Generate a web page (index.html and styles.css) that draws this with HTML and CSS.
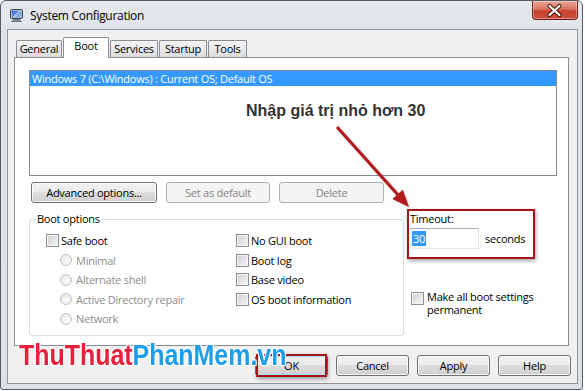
FILE: index.html
```html
<!DOCTYPE html>
<html>
<head>
<meta charset="utf-8">
<title>System Configuration</title>
<link rel="stylesheet" href="styles.css">
</head>
<body>
<div class="window">
  <div class="titlebar">
    <svg class="app-icon" viewBox="0 0 13 13" width="13" height="13">
      <defs>
        <linearGradient id="scr" x1="0" y1="0" x2="1" y2="1">
          <stop offset="0" stop-color="#2a63c9"/>
          <stop offset="1" stop-color="#9cc8ff"/>
        </linearGradient>
      </defs>
      <rect x="0.5" y="0.5" width="12" height="9" rx="1" fill="#a9b3bf" stroke="#3d4a5c"/>
      <rect x="2" y="2" width="9" height="6" fill="url(#scr)"/>
      <path d="M3 8 L9 2 L11 2 L5 8 Z" fill="#ffffff" opacity="0.45"/>
      <path d="M3.5 10.5 H9.5 L11.5 12.5 H1.5 Z" fill="#8892a0" stroke="#3d4a5c" stroke-width="0.6"/>
    </svg>
    <span class="title">System Configuration</span>
    <div class="close">
      <svg viewBox="0 0 46 19" width="46" height="19">
        <path d="M18.5 5 L28.5 14 M28.5 5 L18.5 14" stroke="#4a1208" stroke-width="4.2" stroke-linecap="round"/>
        <path d="M18.5 5 L28.5 14 M28.5 5 L18.5 14" stroke="#ffffff" stroke-width="2.2" stroke-linecap="round"/>
      </svg>
    </div>
  </div>
  <div class="client">
    <div class="tabs">
      <div class="tab tab-general">General</div>
      <div class="tab tab-boot active">Boot</div>
      <div class="tab tab-services">Services</div>
      <div class="tab tab-startup">Startup</div>
      <div class="tab tab-tools">Tools</div>
    </div>
    <div class="panel">
      <div class="listbox">
        <div class="item selected">Windows 7 (C:\Windows) : Current OS; Default OS</div>
      </div>
      <div class="btnrow">
        <button class="btn btn-adv">Advanced options...</button>
        <button class="btn dis btn-default">Set as default</button>
        <button class="btn dis btn-delete">Delete</button>
      </div>
      <div class="lower">
        <fieldset class="group">
          <legend>Boot options</legend>
          <div class="cols">
            <div class="col col-left">
              <div class="opt"><span class="chk"></span><span class="lbl">Safe boot</span></div>
              <div class="opt sub dis"><span class="radio"></span><span class="lbl">Minimal</span></div>
              <div class="opt sub dis"><span class="radio"></span><span class="lbl">Alternate shell</span></div>
              <div class="opt sub dis"><span class="radio"></span><span class="lbl">Active Directory repair</span></div>
              <div class="opt sub dis"><span class="radio"></span><span class="lbl">Network</span></div>
            </div>
            <div class="col col-right">
              <div class="opt"><span class="chk"></span><span class="lbl">No GUI boot</span></div>
              <div class="opt"><span class="chk"></span><span class="lbl">Boot log</span></div>
              <div class="opt"><span class="chk"></span><span class="lbl">Base video</span></div>
              <div class="opt"><span class="chk"></span><span class="lbl">OS boot information</span></div>
            </div>
          </div>
        </fieldset>
        <div class="side">
          <div class="timeout-label">Timeout:</div>
          <div class="timeout-row">
            <div class="textbox"><span class="sel">30</span></div>
            <span class="unit">seconds</span>
          </div>
          <div class="perm"><span class="chk"></span><span class="perm-text">Make all boot settings<br>permanent</span></div>
        </div>
      </div>
    </div>
    <div class="footer">
      <button class="btn btn-foot btn-ok">OK</button>
      <button class="btn btn-foot">Cancel</button>
      <button class="btn btn-foot">Apply</button>
      <button class="btn btn-foot">Help</button>
    </div>
  </div>
</div>

<div class="note">Nhập giá trị nhỏ hơn 30</div>
<svg class="arrow" viewBox="0 0 585 391" width="585" height="391">
  <line x1="337" y1="127" x2="399" y2="196" stroke="#b3191c" stroke-width="3"/>
  <polygon points="409,207 392.4,199.1 402.8,189.7" fill="#b3191c"/>
</svg>
<div class="hl hl-timeout"></div>
<div class="hl hl-ok"></div>
<div class="watermark"><span class="wm-red">ThuThuat</span><span class="wm-blue">PhanMem.vn</span></div>
</body>
</html>
```

FILE: styles.css
```css
* { box-sizing: border-box; }
html, body { margin: 0; padding: 0; }
body {
  width: 585px;
  height: 391px;
  background: #ffffff;
  font-family: "Open Sans", "Noto Sans", sans-serif;
  font-size: 11px;
  letter-spacing: -0.25px;
  color: #000;
  position: relative;
  overflow: hidden;
}

/* window frame */
.window {
  width: 583px;
  height: 390px;
  border: 1px solid #585c61;
  border-radius: 6px 6px 3px 3px;
  background: linear-gradient(#e6e8eb, #dfe3e8 40px, #dde1e6);
  padding: 0 4px 5px 6px;
  display: flex;
  flex-direction: column;
}
.titlebar {
  height: 28px;
  flex: none;
  display: flex;
  align-items: center;
}
.app-icon { margin-left: 3px; margin-top: 1px; flex: none; }
.title {
  margin-left: 7px;
  font-size: 12px;
  letter-spacing: -0.3px;
  color: #000;
}
.close {
  margin-left: auto;
  align-self: flex-start;
  width: 46px;
  height: 19px;
  border: 1px solid #6e2419;
  border-top: none;
  border-radius: 0 0 4px 4px;
  background: linear-gradient(#e9a99a 0%, #d9735f 45%, #c8412c 55%, #c9503a 100%);
  box-shadow: inset 0 0 0 1px rgba(255,255,255,0.35);
  display: flex;
  align-items: center;
  justify-content: center;
  overflow: hidden;
}
.close svg { flex: none; margin-left: -2px; }

/* client */
.client {
  flex: 1;
  border: 1px solid #8f959b;
  background: #f0f0f0;
  padding: 7px 6px 0 6px;
  display: flex;
  flex-direction: column;
}

/* tabs */
.tabs {
  display: flex;
  align-items: flex-end;
  height: 20px;
  margin-left: 2px;
  flex: none;
}
.tab {
  height: 17px;
  border: 1px solid #898c95;
  border-bottom: none;
  border-radius: 2px 2px 0 0;
  background: linear-gradient(#f4f4f4, #e9e9e9 50%, #dcdcdc);
  text-align: center;
  line-height: 15px;
  color: #000;
}
.tab + .tab { margin-left: 1px; }
.tab-general { width: 46px; }
.tab-boot { width: 46px; }
.tab-services { width: 48px; }
.tab-startup { width: 48px; }
.tab-tools { width: 39px; }
.tab.active {
  height: 21px;
  margin-bottom: -1px;
  background: #ffffff;
  position: relative;
  z-index: 2;
  line-height: 16px;
}

/* panel */
.panel {
  height: 289px;
  margin-right: 2px;
  border: 1px solid #898c95;
  background: #ffffff;
  padding: 12px 11px 0 14px;
  display: flex;
  flex-direction: column;
  flex: none;
}
.listbox {
  height: 106px;
  border: 1px solid #828790;
  background: #fff;
  flex: none;
}
.item {
  height: 15px;
  line-height: 15px;
  padding-left: 2px;
  white-space: nowrap;
}
.item.selected { background: #3399ff; color: #fff; }

.btnrow {
  display: flex;
  gap: 9px;
  margin-top: 6px;
  margin-left: 2px;
  flex: none;
}
.btn {
  font: inherit;
  letter-spacing: inherit;
  height: 21px;
  padding: 0;
  border: 1px solid #707070;
  border-radius: 3px;
  background: linear-gradient(#f2f2f2 0%, #ebebeb 49%, #dddddd 50%, #cfcfcf 100%);
  box-shadow: inset 0 0 0 1px rgba(255,255,255,0.8);
  color: #000;
  text-align: center;
  line-height: 18px;
}
.btn.dis {
  border-color: #adb2b5;
  background: #f4f4f4;
  box-shadow: none;
  color: #838383;
}
.btn-adv { width: 126px; }
.btn-default { width: 104px; }
.btn-delete { width: 105px; }

/* lower part */
.lower {
  display: flex;
  margin-top: 9px;
  flex: none;
}
.group {
  width: 375px;
  margin: 0;
  padding: 5px 0 6px 0;
  border: 1px solid #d5dfe5;
  border-radius: 3px;
  min-width: 0;
}
.group legend {
  margin-left: 5px;
  padding: 0 2px;
  line-height: 14px;
  color: #000;
}
.cols { display: flex; padding-left: 16px; }
.col-left { width: 190px; }
.opt {
  height: 19.5px;
  display: flex;
  align-items: center;
  white-space: nowrap;
}
.chk {
  width: 13px;
  height: 13px;
  flex: none;
  border: 1px solid #8e8f8f;
  background: linear-gradient(135deg, #cbcfd5, #f6f6f6);
  box-shadow: inset 0 0 0 1px #f4f4f4;
}
.opt .lbl { margin-left: 2px; }
.opt.sub { padding-left: 14px; }
.radio {
  width: 12px;
  height: 12px;
  flex: none;
  border: 1px solid #c3c3c3;
  border-radius: 50%;
  background: radial-gradient(circle at 60% 65%, #fbfbfb, #e4e4e4);
}
.opt.sub .lbl { margin-left: 4px; }
.opt.dis .lbl { color: #8d8d8d; }

.side {
  margin-left: 6px;
  display: flex;
  flex-direction: column;
}
.timeout-label { line-height: 14px; }
.timeout-row {
  display: flex;
  align-items: center;
  margin-top: 2px;
}
.textbox {
  width: 69px;
  height: 21px;
  border: 1px solid #abadb3;
  border-color: #abadb3 #dbdfe6 #e3e9ef #e2e3ea;
  background: #fff;
  padding: 2px 0 0 1px;
}
.sel {
  display: inline-block;
  background: #3399ff;
  color: #fff;
  line-height: 15px;
  padding: 0 1px;
}
.unit { margin-left: 6px; }
.perm {
  display: flex;
  align-items: flex-start;
  margin-top: 41px;
}
.perm .chk { margin-left: 1px; margin-top: 2px; }
.perm-text { margin-left: 3px; line-height: 13px; }

/* footer */
.footer {
  display: flex;
  justify-content: flex-end;
  gap: 8px;
  margin-top: 9px;
  flex: none;
}
.btn-foot { width: 73px; }
.btn-ok {
  border-color: #3c7fb1;
  box-shadow: inset 0 0 0 1px #a6e0f8;
}

/* annotations */
.note {
  position: absolute;
  left: 246px;
  top: 102px;
  font-family: "Liberation Sans", Arial, sans-serif;
  font-weight: bold;
  font-size: 16px;
  line-height: 18px;
  letter-spacing: 0;
  color: #333333;
  white-space: nowrap;
}
.arrow {
  position: absolute;
  left: 0;
  top: 0;
  pointer-events: none;
  filter: drop-shadow(1px 1px 1px rgba(0,0,0,0.25));
}
.hl {
  position: absolute;
  border: 2px solid #a3151b;
  box-shadow: 1px 2px 4px rgba(0,0,0,0.35);
}
.hl-timeout { left: 407px; top: 209px; width: 128px; height: 50px; }
.hl-ok { left: 256px; top: 354px; width: 71px; height: 23px; }

.watermark {
  position: absolute;
  left: 19px;
  top: 341px;
  font-family: "Liberation Sans", Arial, sans-serif;
  font-weight: bold;
  font-size: 29px;
  line-height: 29px;
  letter-spacing: 0;
  white-space: nowrap;
  transform: scaleX(0.86);
  transform-origin: left top;
  text-shadow: 1px 0 0 #fff, -1px 0 0 #fff, 0 1px 0 #fff, 0 -1px 0 #fff, 1px 1px 0 #fff, -1px -1px 0 #fff, 1px -1px 0 #fff, -1px 1px 0 #fff;
}
.wm-red { color: #e6213d; }
.wm-blue { color: #1e9ee8; }
```
